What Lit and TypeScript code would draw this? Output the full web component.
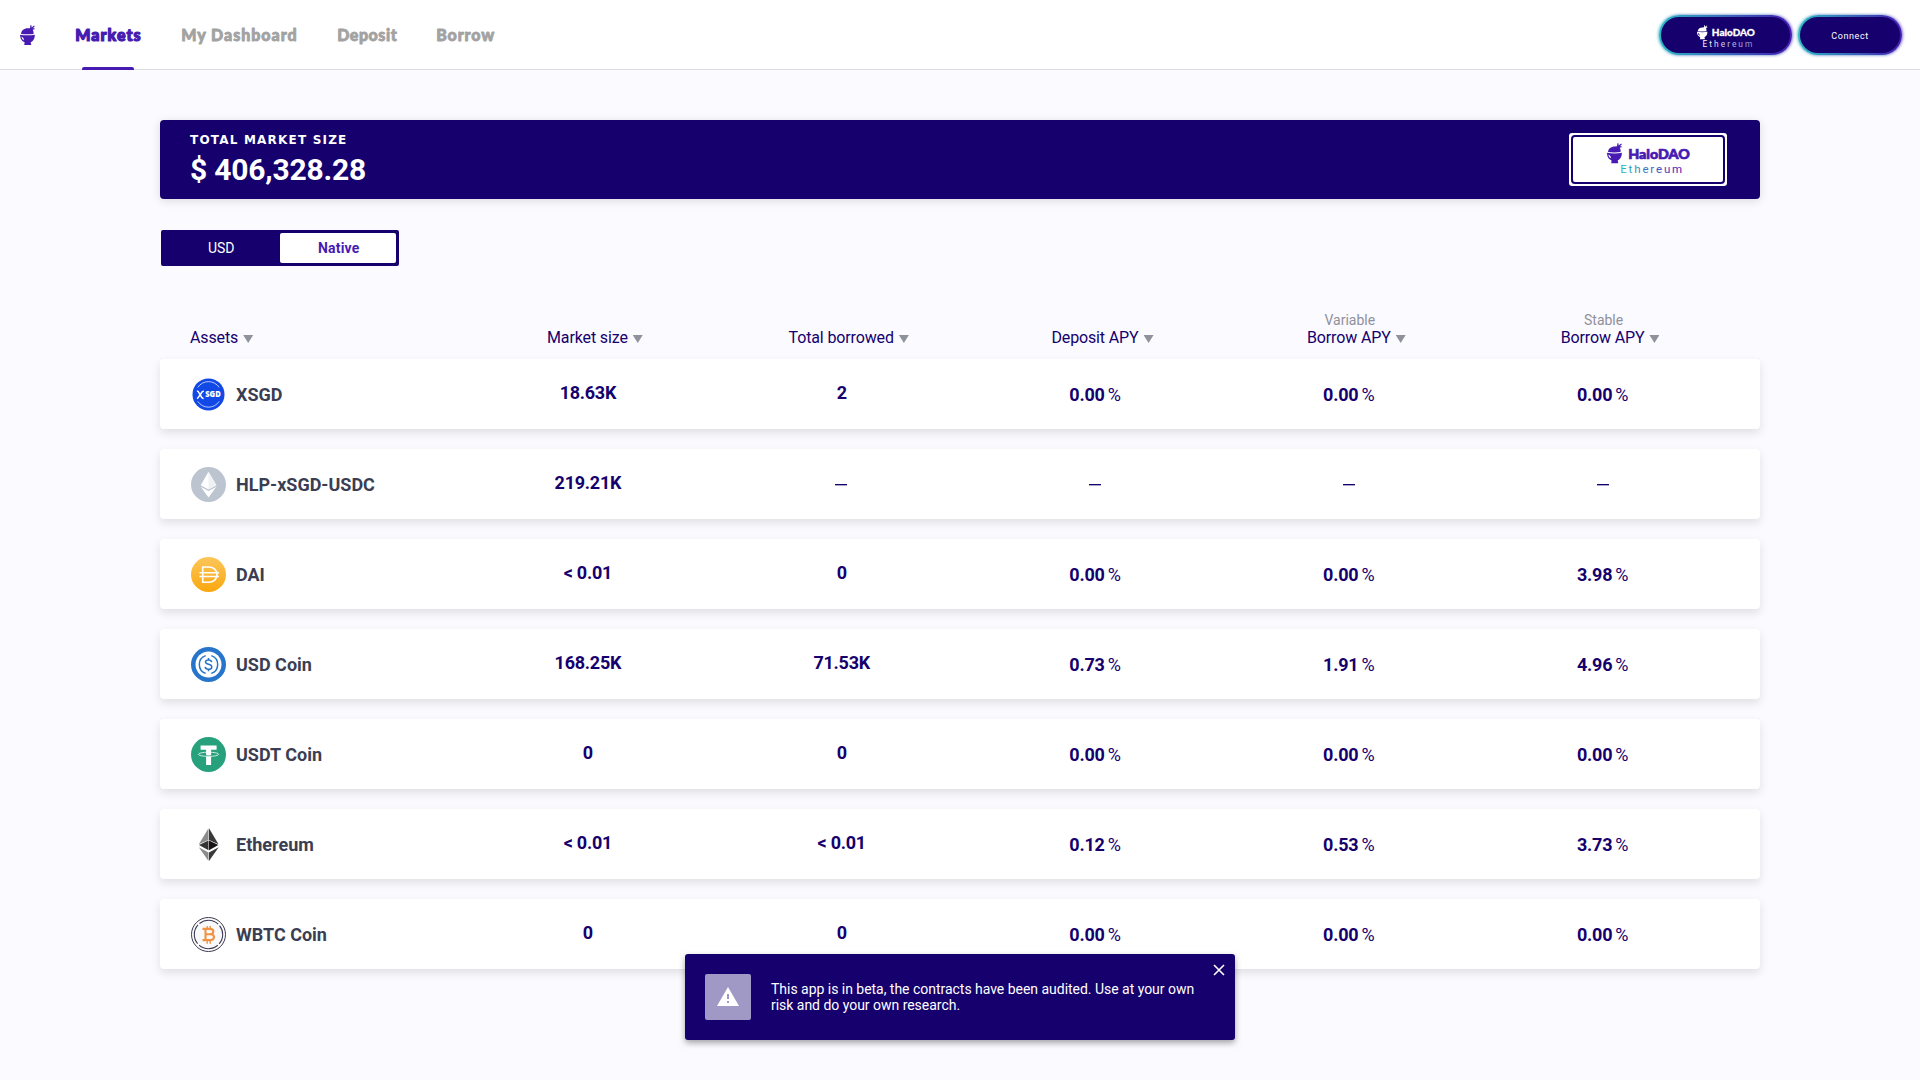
import { LitElement, html, css, svg } from "lit";
import { customElement } from "lit/decorators.js";

type Asset = { icon: string; name: string; size: string; borrowed: string; apys: string[] };

const assets: Asset[] = [
  { icon: "xsgd", name: "XSGD", size: "18.63K", borrowed: "2", apys: ["0.00", "0.00", "0.00"] },
  { icon: "hlp", name: "HLP-xSGD-USDC", size: "219.21K", borrowed: "", apys: ["", "", ""] },
  { icon: "dai", name: "DAI", size: "< 0.01", borrowed: "0", apys: ["0.00", "0.00", "3.98"] },
  { icon: "usdc", name: "USD Coin", size: "168.25K", borrowed: "71.53K", apys: ["0.73", "1.91", "4.96"] },
  { icon: "usdt", name: "USDT Coin", size: "0", borrowed: "0", apys: ["0.00", "0.00", "0.00"] },
  { icon: "eth", name: "Ethereum", size: "< 0.01", borrowed: "< 0.01", apys: ["0.12", "0.53", "3.73"] },
  { icon: "wbtc", name: "WBTC Coin", size: "0", borrowed: "0", apys: ["0.00", "0.00", "0.00"] },
];

const columns = [
  { label: "Assets", sub: "" },
  { label: "Market size", sub: "" },
  { label: "Total borrowed", sub: "" },
  { label: "Deposit APY", sub: "" },
  { label: "Borrow APY", sub: "Variable" },
  { label: "Borrow APY", sub: "Stable" },
];

const icons: Record<string, unknown> = {
  xsgd: svg`
    <circle cx="17.500" cy="17.400" r="16" fill="#1148e6"/>
    <path d="M6.800 10.400A12.800 12.800 0 0 1 28.200 10.400M6.800 24.400A12.800 12.800 0 0 0 28.200 24.400" fill="none" stroke="#dfe7ff" stroke-width=".8"/>
    <path d="M5.900 14c1.700 0 2 1.300 2.700 3.100l1 1.300c.6 1.500 1.300 3 3 3M12.800 13.900c-1.600.2-2.300 1.300-3.200 3.200l-1 1.300c-.7 1.200-1.600 2.800-2.600 3.300" fill="none" stroke="#fff" stroke-width="1.500"/>
    <text x="14.200" y="20.200" font-family="Open Sans, sans-serif" font-weight="800" font-size="7.800" textLength="15.500" lengthAdjust="spacingAndGlyphs" fill="#fff">SGD</text>`,
  hlp: svg`
    <circle cx="17.500" cy="17.500" r="17.500" fill="#bcc4cf"/>
    <path d="M17.500 4.800 9.700 18.200l7.800 4.300 7.900-4.300z" fill="#fff"/>
    <path d="M17.500 4.800v17.700l7.900-4.300z" fill="#f0f1f3"/>
    <path d="M9.700 19.700 17.500 30.500l7.900-10.800-7.900 4.400z" fill="#fff"/>`,
  dai: svg`
    <defs><linearGradient id="dai" x1="0" y1="0" x2="0" y2="1"><stop offset="0" stop-color="#fcc65a"/><stop offset="1" stop-color="#faa70e"/></linearGradient></defs>
    <circle cx="17.500" cy="17.500" r="17.500" fill="url(#dai)"/>
    <path d="M11.700 10h5.800c5.200 0 8.500 3.200 8.500 7.600s-3.300 7.600-8.500 7.600h-5.800zM8.500 15.700H28M8.500 19.500H28" fill="none" stroke="#fff" stroke-width="1.600"/>`,
  usdc: svg`
    <circle cx="17.500" cy="17.500" r="17.500" fill="#2775ca"/>
    <circle cx="17.500" cy="17.500" r="13" fill="#fff"/>
    <path d="M14.700 8.600a9.400 9.400 0 0 0 0 17.800M20.300 8.600a9.400 9.400 0 0 1 0 17.800" fill="none" stroke="#2775ca" stroke-width="1.500"/>
    <path d="M20.600 15.100c-.2-1.400-1.300-2.100-3.100-2.100-1.900 0-3 .8-3 2.100 0 1.600 1.400 1.900 3 2.200 1.900.4 3.300.8 3.300 2.600 0 1.600-1.400 2.400-3.300 2.400-2 0-3.200-.8-3.400-2.400M17.500 11v2.100M17.500 22.200v2.100" fill="none" stroke="#2775ca" stroke-width="1.500"/>`,
  usdt: svg`
    <circle cx="17.500" cy="17.500" r="17.500" fill="#27a17c"/>
    <path d="M9.600 8.500h16v4.200h-5.500V28h-5v-15.300h-5.500z" fill="#fff"/>
    <ellipse cx="17.500" cy="17.300" rx="10.200" ry="2.100" fill="none" stroke="#fff" stroke-width=".75"/>
    <path d="M15 18.700q2.500.3 5.200 0" fill="none" stroke="#27a17c" stroke-width=".8"/>`,
  eth: svg`
    <path d="M17.500 1.300 7.800 17.200l9.700-4.300z" fill="#8c8c8c"/>
    <path d="M18 1.300v11.600l9.500 4.300z" fill="#393939"/>
    <path d="M17.500 13.600 8 18l9.500 5.300z" fill="#343434"/>
    <path d="M18 13.600v9.700l9.300-5.300z" fill="#171413"/>
    <path d="M7.800 20.200 17.500 34v-8.500z" fill="#8c8c8c"/>
    <path d="M18 25.500V34l9.700-13.800z" fill="#393939"/>`,
  wbtc: svg`
    <circle cx="17.500" cy="17.500" r="17" fill="#fff" stroke="#3b3a52" stroke-width="1"/>
    <circle cx="17.500" cy="17.500" r="14.200" fill="#f9f9fb" stroke="#3b3a52" stroke-width="1.100" stroke-dasharray="20.300 2" stroke-dashoffset="-12.150"/>
    <path d="M11.500 11.900h7.500c2.300 0 3.300 1 3.300 2.600 0 1.700-1.200 2.700-3.300 2.700h-4 4.500c2.300 0 3.500 1.100 3.500 2.900 0 1.900-1.300 3-3.500 3h-8M14.500 11.900v11.200" fill="none" stroke="#f09242" stroke-width="2.100"/>
    <path d="M16.200 8.900v3M19.200 8.900v3M16.200 23.500v3.200M19.200 23.500v3.200" fill="none" stroke="#f09242" stroke-width="1.400"/>`,
};

const bowl = svg`
  <path d="M1 9C1.300 5.600 4.200 3.300 7.800 3.400L10.100 3.200 10.300.6 11.300 0l.4 2.500L14.100.6l.7 1-2 1.700 1.900-.1v1.100l-2 .4c.8 1.200 1.100 2.700.9 4.300-4 .6-8.600.6-12.600 0z"/>
  <path fill-rule="evenodd" d="M0 9.800c4.500.8 10.500.8 14.900 0 0 4-1.500 6.400-4.200 7.600l.6 2.800H4.200l.4-2.800C1.600 16.200 0 13.900 0 9.800zm1.400 1.700c.2 1.900 1.100 3.200 2.500 3.800-.1-1.700-.7-3.100-2.500-3.800z"/>`;

@customElement("app-root")
export class AppRoot extends LitElement {
  static styles = css`
    :host {
      display: block;
      position: relative;
      width: 1920px;
      height: 1080px;
      overflow: hidden;
      background: #fafaff;
      color: #15006d;
      font-family: Roboto, sans-serif;
      --navy: #15006d;
      --violet: #471bb2;
    }
    * { box-sizing: border-box; }
    svg { display: block; overflow: visible; }
    .header {
      display: flex;
      align-items: center;
      height: 70px;
      padding: 0 18px 0 20px;
      background: #fff;
      border-bottom: 1px solid #dbdbe4;
    }
    .brand { width: 15px; height: 20px; fill: var(--violet); }
    .nav { display: flex; gap: 39.500px; margin-left: 39.500px; height: 70px; }
    .link {
      display: flex;
      flex-direction: column;
      align-items: center;
      justify-content: space-between;
      padding-top: 24px;
      height: 70px;
      color: #a2a2a2;
    }
    .link.active { color: var(--violet); }
    .bar { width: 52px; height: 3px; border-radius: 2px 2px 0 0; }
    .active .bar { background: var(--violet); }
    .round {
      font-family: Lato, sans-serif;
      font-weight: 900;
      stroke-linejoin: round;
    }
    .actions { display: flex; gap: 6px; margin-left: auto; }
    .pill {
      display: flex;
      flex-direction: column;
      align-items: center;
      justify-content: center;
      height: 40px;
      border: 2px solid transparent;
      border-radius: 20px;
      background: linear-gradient(var(--navy), var(--navy)) padding-box,
        linear-gradient(90deg, #2bb9c3, #471bb2) border-box;
      color: #fff;
      box-shadow: -1px 0 3px rgba(43, 185, 195, 0.6), 1px 0 3px rgba(71, 27, 178, 0.6);
    }
    .pill.network { width: 133px; padding-top: 3px; }
    .pill.connect { width: 104px; font-size: 9px; letter-spacing: 0.6px; padding-top: 2px; }
    .main { padding: 50px 160px 0; }
    .total {
      display: flex;
      align-items: center;
      justify-content: space-between;
      height: 79px;
      padding: 0 33px 0 30px;
      border-radius: 4px;
      background: var(--navy);
      color: #fff;
      box-shadow: 0 2px 10px rgba(0, 0, 0, 0.13);
    }
    .caption {
      font: bold 12px/16px "DejaVu Sans", sans-serif;
      letter-spacing: 1.2px;
    }
    .amount { font-size: 30px; line-height: 36px; font-weight: 700; letter-spacing: -0.2px; margin-top: 4px; }
    .market {
      width: 158px;
      height: 53px;
      padding: 2px;
      border-radius: 3px;
      background: #fff;
    }
    .market-inner {
      height: 49px;
      border: 2px solid var(--navy);
      border-radius: 4px;
    }
    .toggle {
      display: flex;
      width: 238px;
      height: 36px;
      margin: 31px 0 0 1px;
      padding: 3px;
      border-radius: 2px;
      background: var(--navy);
      font-size: 14px;
    }
    .option { flex: 1; display: flex; align-items: center; justify-content: center; padding-right: 1px; color: #fff; }
    .option.on { background: #fff; color: var(--violet); font-weight: 700; letter-spacing: 0.2px; padding: 0 0 0 2px; border-radius: 2px; }
    .grid {
      display: grid;
      grid-template-columns: 270.500px 253.800px 253.800px 253.800px 253.800px 253.800px;
      padding: 0 30px;
    }
    .heads { height: 93px; padding-bottom: 11px; align-items: end; }
    .head { display: flex; flex-direction: column; align-items: center; padding-left: 15px; font-size: 16px; line-height: 20px; letter-spacing: -0.13px; }
    .head:first-child { align-items: flex-start; padding-left: 0; }
    .sub { font-size: 14px; line-height: 15px; letter-spacing: 0; color: #8f919b; padding-right: 13px; }
    .sort { display: flex; align-items: center; gap: 5px; }
    .arrow {
      width: 10px;
      height: 8px;
      margin-top: 2px;
      background: #8f919b;
      clip-path: polygon(0 0, 100% 0, 50% 100%);
    }
    .rows { display: flex; flex-direction: column; gap: 20px; }
    .row {
      height: 70px;
      align-items: center;
      border-radius: 4px;
      background: #fff;
      box-shadow: 0 4px 10px rgba(0, 0, 0, 0.11);
      font-size: 18px;
    }
    .asset { display: flex; align-items: center; gap: 10px; padding: 1px 0 0 1px; color: #3b3e52; font-weight: 700; }
    .icon { width: 35px; height: 35px; }
    .value { text-align: center; font-weight: 700; line-height: 22px; letter-spacing: -0.25px; padding: 0 0 3px 1px; }
    .apy { display: flex; align-items: baseline; justify-content: center; gap: 3px; font-weight: 700; letter-spacing: -0.2px; padding-top: 1px; }
    .percent { font-weight: 400; }
    .dash { width: 12px; height: 1px; margin: 1px auto 0; background: var(--navy); box-shadow: 0 1px rgba(21, 0, 109, 0.35); }
    .toast {
      position: absolute;
      left: 685px;
      top: 954px;
      display: flex;
      align-items: center;
      gap: 20px;
      width: 550px;
      height: 86px;
      padding: 0 20px;
      border-radius: 3px;
      background: var(--navy);
      color: #fff;
      font-size: 14px;
      line-height: 16px;
      letter-spacing: -0.025px;
      box-shadow: 0 3px 6px rgba(0, 0, 0, 0.35);
    }
    .warn {
      display: flex;
      align-items: center;
      justify-content: center;
      width: 46px;
      height: 46px;
      flex: none;
      padding-bottom: 1px;
      border-radius: 2px;
      background: #a199c5;
    }
    .close { position: absolute; right: 10px; top: 10px; width: 12px; height: 12px; }
  `;

  private logo(uid: string, light: boolean, scale: number) {
    const main = light ? "#fff" : "#471bb2";
    return svg`
      <defs>
        <linearGradient id=${uid} x1="0" x2="1">
          <stop offset="0" stop-color=${light ? "#fff" : "#2bb9c3"}/>
          <stop offset="1" stop-color=${light ? "#9187c0" : "#471bb2"}/>
        </linearGradient>
      </defs>
      <g transform="scale(${scale})">
        <g fill=${main}>${bowl}</g>
        <text class="round" x="21.200" y="16.100" font-size="13.800" fill=${main} stroke=${main} stroke-width=${light ? 0.4 : 0.7} textLength="61.500" lengthAdjust="spacingAndGlyphs">HaloDAO</text>
        <text x=${light ? 8 : 13.2} y=${light ? 32 : 29.7} font-family="Roboto, sans-serif" font-weight="400" font-size=${light ? 12 : 11.5} textLength=${light ? 71 : 62} fill="url(#${uid})">Ethereum</text>
      </g>`;
  }

  private link(label: string, width: number, text: number, active = false) {
    const color = active ? "#471bb2" : "#a2a2a2";
    return html`<a class="link ${active ? "active" : ""}">
      <svg width=${width} height="22">
        <text class="round" x="0.200" y="17.200" font-size="16" fill=${color} stroke=${color} stroke-width=${active ? 1.2 : 0.8} textLength=${text} lengthAdjust="spacing">${label}</text>
      </svg>
      <span class="bar"></span>
    </a>`;
  }

  private apy(value: string) {
    return value
      ? html`<div class="apy"><span>${value}</span><span class="percent">%</span></div>`
      : html`<div class="dash"></div>`;
  }

  render() {
    return html`
      <header class="header">
        <svg class="brand" viewBox="0 0 15 20.200">${bowl}</svg>
        <nav class="nav">
          ${this.link("Markets", 67, 65.5, true)} ${this.link("My Dashboard", 116, 115.5)}
          ${this.link("Deposit", 60, 59.5)} ${this.link("Borrow", 58, 58)}
        </nav>
        <div class="actions">
          <div class="pill network"><svg width="58" height="23">${this.logo("net", true, 0.7)}</svg></div>
          <div class="pill connect">Connect</div>
        </div>
      </header>
      <main class="main">
        <section class="total">
          <div>
            <div class="caption">TOTAL MARKET SIZE</div>
            <div class="amount">$ 406,328.28</div>
          </div>
          <div class="market">
            <div class="market-inner">
              <svg width="154" height="45"><g transform="translate(34 6)">${this.logo("mkt", false, 1)}</g></svg>
            </div>
          </div>
        </section>
        <div class="toggle"><div class="option">USD</div><div class="option on">Native</div></div>
        <div class="grid heads">
          ${columns.map((c) => html`<div class="head">
            ${c.sub ? html`<span class="sub">${c.sub}</span>` : ""}
            <span class="sort">${c.label}<i class="arrow"></i></span>
          </div>`)}
        </div>
        <div class="rows">
          ${assets.map((a) => html`<div class="grid row">
            <div class="asset"><svg class="icon" viewBox="0 0 35 35">${icons[a.icon]}</svg>${a.name}</div>
            <div class="value">${a.size}</div>
            ${a.borrowed ? html`<div class="value">${a.borrowed}</div>` : this.apy("")}
            ${a.apys.map((v) => this.apy(v))}
          </div>`)}
        </div>
      </main>
      <aside class="toast">
        <div class="warn">
          <svg width="22" height="19" viewBox="0 0 22 19"><path fill="#fff" fill-rule="evenodd" d="M11 0 22 19H0zM10 7v5h2V7zm0 7v2h2v-2z"/></svg>
        </div>
        <div>This app is in beta, the contracts have been audited. Use at your own risk and do your own research.</div>
        <svg class="close" viewBox="0 0 12 12"><path d="M1 1l10 10M11 1L1 11" stroke="#fff" stroke-width="1.600"/></svg>
      </aside>
    `;
  }
}
